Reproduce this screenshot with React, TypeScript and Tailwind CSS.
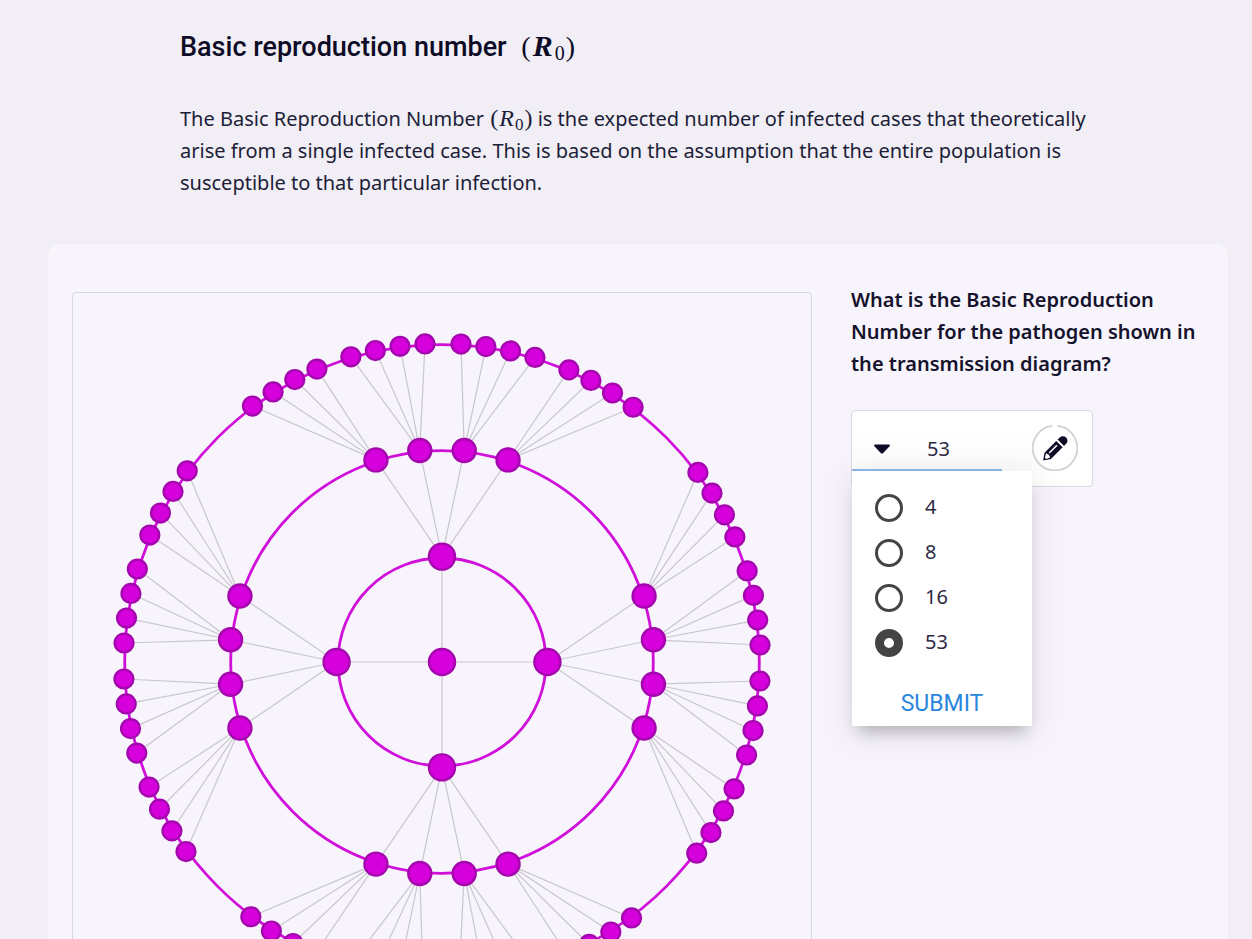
import { useState } from "react";

const CENTER = 369;
const QUADRANTS = [0, 90, 180, 270];
const MIDDLE_OFFSETS = [-18.1, -6, 6, 18.1];
const OUTER_TILT = 0.18;

// Outer cases belonging to each middle case, as offsets from the quadrant axis.
const OUTER_OFFSETS = [
  [-36.7, -32.2, -27.7, -23.3],
  [-16.8, -12.25, -7.75, -3.24],
  [3.24, 7.75, 12.25, 16.8],
  [23.3, 27.7, 32.2, 36.7],
];

type Point = { x: number; y: number };

function polar(radius: number, degrees: number): Point {
  const a = (degrees * Math.PI) / 180;
  return { x: CENTER + radius * Math.sin(a), y: CENTER - radius * Math.cos(a) };
}

function buildTree() {
  const center = { x: CENTER, y: CENTER };
  const links: [Point, Point][] = [];
  const nodes: (Point & { r: number })[] = [{ ...center, r: 13 }];
  for (const axis of QUADRANTS) {
    const inner = polar(105.4, axis);
    links.push([center, inner]);
    nodes.push({ ...inner, r: 13 });
    MIDDLE_OFFSETS.forEach((offset, i) => {
      const middle = polar(212.6, axis + offset);
      links.push([inner, middle]);
      nodes.push({ ...middle, r: 11.5 });
      OUTER_OFFSETS[i].forEach((o) => {
        const outer = polar(318.5, axis + o + OUTER_TILT);
        links.push([middle, outer]);
        nodes.push({ ...outer, r: 9.4 });
      });
    });
  }
  return { links, nodes };
}

const tree = buildTree();

function TransmissionDiagram() {
  return (
    <svg viewBox="0 0 738 738" className="block w-full" role="img" aria-label="Transmission diagram">
      <g stroke="#c9c6ce" strokeWidth="1.2">
        {tree.links.map(([a, b], i) => (
          <line key={i} x1={a.x} y1={a.y} x2={b.x} y2={b.y} />
        ))}
      </g>
      <g fill="none" stroke="#d010da" strokeWidth="2.8">
        <circle cx={CENTER} cy={CENTER} r="104" />
        <circle cx={CENTER} cy={CENTER} r="211.3" />
        <circle cx={CENTER} cy={CENTER} r="317.3" />
      </g>
      <g fill="#d500dc" stroke="#a406ad" strokeWidth="2.4">
        {tree.nodes.map((n, i) => (
          <circle key={i} cx={n.x} cy={n.y} r={n.r} />
        ))}
      </g>
    </svg>
  );
}

function R0({ bold = false }: { bold?: boolean }) {
  return bold ? (
    <span className="inline-flex items-baseline gap-px pl-2 font-['Liberation_Serif',serif] text-[28px] leading-none">
      <span>(</span>
      <i className="px-px text-[30px] leading-none font-bold">R</i>
      <span className="relative top-1 text-[20px] leading-none">0</span>
      <span>)</span>
    </span>
  ) : (
    <span className="inline-flex items-baseline gap-px pl-px font-['Liberation_Serif',serif] text-[24px] leading-none">
      <span>(</span>
      <i>R</i>
      <span className="relative top-1 text-[17px] leading-none">0</span>
      <span>)</span>
    </span>
  );
}

const OPTIONS = ["4", "8", "16", "53"];

function AnswerPicker() {
  const [value, setValue] = useState("53");
  const [open, setOpen] = useState(true);
  return (
    <div className="mt-[30px] flex w-[242px] items-start rounded border border-[#d9d7e0] bg-white pt-[14px] pb-[13px] text-[#2e2a44]">
      <div className="relative w-[180px]">
        <button
          type="button"
          aria-expanded={open}
          onClick={() => setOpen(!open)}
          className="flex h-12 w-full items-center bg-gradient-to-b from-white to-[#fcfcfd] pl-[22px] text-left"
        >
          <svg viewBox="0 0 16 10" className="h-[10px] w-4" aria-hidden="true">
            <path d="M1 .6h14c.9 0 1.2.9.6 1.6L9.2 9c-.7.7-1.7.7-2.4 0L.4 2.2C-.2 1.5.1.6 1 .6z" fill="#0d0b26" />
          </svg>
          <span className="pl-[37px]">{value}</span>
        </button>
        <div className="absolute top-11 left-0 h-[2px] w-[150px] bg-[#8db8ea]" />
        {open && (
          <form
            onSubmit={(e) => {
              e.preventDefault();
              setOpen(false);
            }}
            className="absolute top-[46px] left-0 w-[180px] bg-white pt-[13px] shadow-[0_12px_15px_-7px_rgba(0,0,0,0.24),0_6px_30px_5px_rgba(20,10,50,0.08)]"
          >
            {OPTIONS.map((option) => (
              <label key={option} className="flex h-[45px] cursor-pointer items-center pl-[23px]">
                <input
                  type="radio"
                  name="answer"
                  value={option}
                  checked={value === option}
                  onChange={() => setValue(option)}
                  className="mt-[3px] h-7 w-7 appearance-none rounded-full border-[3px] border-[#444] checked:border-[9px]"
                />
                <span className="pl-[22px]">{option}</span>
              </label>
            ))}
            <button
              type="submit"
              className="mt-[18px] block h-[44px] w-full text-center font-[Roboto,sans-serif] text-[23px] text-[#2a86dc]"
            >
              SUBMIT
            </button>
          </form>
        )}
      </div>
      <button type="button" aria-label="Edit answer" className="block h-[46px] w-[46px] shrink-0">
        <svg viewBox="0 0 46 46" className="h-full w-full" aria-hidden="true">
          <path d="M25.6.9A22.3 22.3 0 1 1 20.4.9" fill="none" stroke="#d2d1d5" strokeWidth="1.8" />
          <g transform="translate(10.8 35.8) rotate(-45)" fill="#0d0b26">
            <path
              fillRule="evenodd"
              d="M.5 0 7-4.5H23.5V4.5H7ZM3.6-.6 3.6 1 7.6 3 8.6 0 7.600-3ZM10-1.8 10-.2 21-.2 21-1.8Z"
            />
            <path d="M25.500-4.500H28.500a4.500 4.500 0 0 1 0 9H25.500Z" />
          </g>
        </svg>
      </button>
    </div>
  );
}

export default function App() {
  return (
    <main className="h-screen overflow-x-hidden overflow-y-auto bg-[#f1eef5] pt-6 pr-6 pl-12 font-['Noto_Sans',sans-serif] text-[20px] leading-8 text-[#201d38]">
      <section className="mr-[134px] ml-[132px]">
        <h2 className="h-12 font-[Roboto,sans-serif] text-[27px] leading-[46px] font-medium text-[#0d0b26]">
          Basic reproduction number <R0 bold />
        </h2>
        <p className="mt-[31px]">
          The Basic Reproduction Number <R0 /> is the expected number of infected cases that theoretically arise from a
          single infected case. This is based on the assumption that the entire population is susceptible to that
          particular infection.
        </p>
      </section>

      <section className="mt-[45px] grid grid-cols-[740fr_353fr] gap-[39px] rounded-xl bg-[#f7f4fb] px-6 pt-10 pb-12">
        <div className="mt-2 self-start rounded border border-[#d9d7e0]">
          <TransmissionDiagram />
        </div>
        <div>
          <h3 className="font-semibold text-[#15122c]">
            What is the Basic Reproduction Number for the pathogen shown in the transmission diagram?
          </h3>
          <AnswerPicker />
        </div>
      </section>
    </main>
  );
}
